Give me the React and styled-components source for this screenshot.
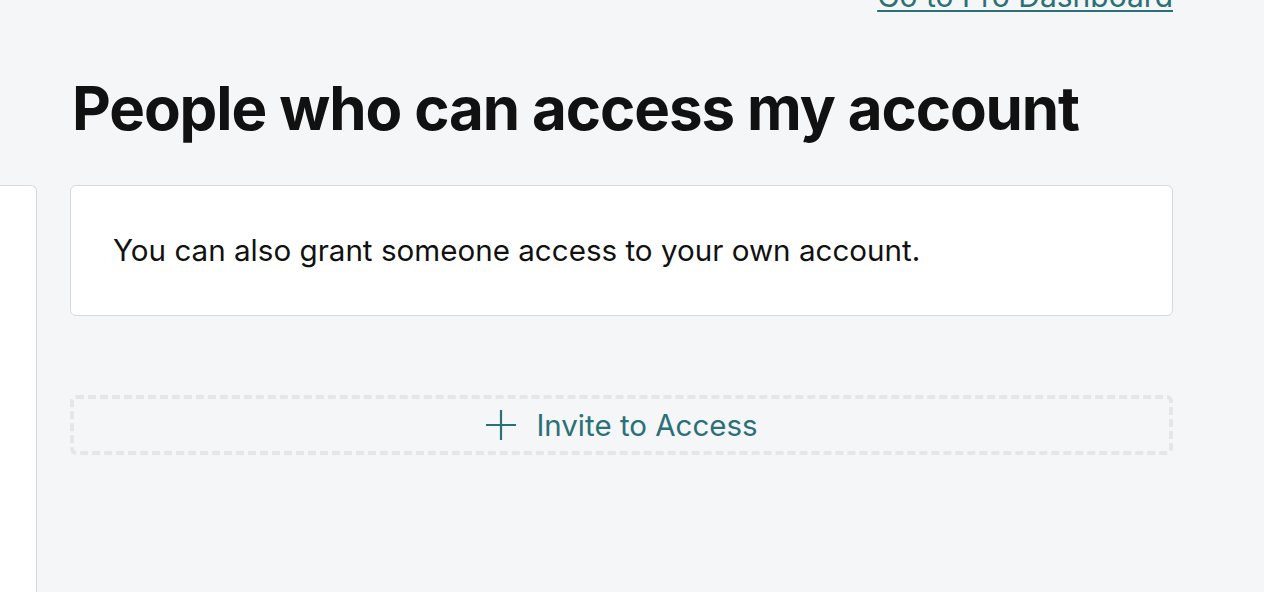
import React from "react";
import styled, { createGlobalStyle } from "styled-components";

const colors = {
  page: "#f5f6f8",
  white: "#ffffff",
  ink: "#111111",
  teal: "#2b7077",
  line: "#d4dbe0",
  dash: "#e5e6e7",
};

const GlobalStyle = createGlobalStyle`
  html, body {
    margin: 0;
    padding: 0;
    background: ${colors.page};
    font-family: Inter, "Noto Sans", sans-serif;
    color: ${colors.ink};
    overflow: hidden;
  }
`;

const Layout = styled.div`
  display: grid;
  grid-template-columns: 37px 1103px;
  grid-template-rows: auto 1fr;
  column-gap: 33px;
  min-height: 100vh;
`;

const Header = styled.header`
  grid-column: 2;
  grid-row: 1;
  display: flex;
  flex-direction: column;
`;

const ProLink = styled.a`
  align-self: flex-end;
  margin-top: -18px;
  font-size: 30px;
  line-height: 28px;
  color: ${colors.teal};
  text-decoration: underline;
  text-decoration-thickness: 2px;
  text-underline-offset: 3px;
`;

const Title = styled.h1`
  margin: 60px 0 0 2px;
  font-size: 60px;
  line-height: 76px;
  font-weight: 700;
  letter-spacing: -1.1px;
`;

const Sidebar = styled.aside`
  grid-column: 1;
  grid-row: 2;
  margin-top: 39px;
  background: ${colors.white};
  border: 1.5px solid ${colors.line};
  border-left: none;
  border-bottom: none;
  border-radius: 0 6px 0 0;
`;

const Main = styled.main`
  grid-column: 2;
  grid-row: 2;
  padding-top: 39px;
  display: flex;
  flex-direction: column;
  gap: 79px;
`;

const InfoCard = styled.section`
  box-sizing: border-box;
  height: 131px;
  display: flex;
  align-items: center;
  padding: 0 42px 2px;
  background: ${colors.white};
  border: 1.5px solid ${colors.line};
  border-radius: 6px;
  font-size: 29.6px;
`;

const InviteButton = styled.button`
  box-sizing: border-box;
  height: 60px;
  display: flex;
  align-items: center;
  justify-content: center;
  gap: 19px;
  background: transparent;
  border: 4px dashed ${colors.dash};
  border-radius: 6px;
  color: ${colors.teal};
  font-family: inherit;
  font-size: 29.5px;
  cursor: pointer;
`;

const PlusIcon = () => (
  <svg width="32" height="32" viewBox="0 0 32 32" fill="none">
    <path d="M16 1v30M1 16h30" stroke={colors.teal} strokeWidth="2.2" />
  </svg>
);

export default function App() {
  return (
    <>
      <GlobalStyle />
      <Layout>
        <Header>
          <ProLink href="#">Go to Pro Dashboard</ProLink>
          <Title>People who can access my account</Title>
        </Header>
        <Sidebar />
        <Main>
          <InfoCard>You can also grant someone access to your own account.</InfoCard>
          <InviteButton>
            <PlusIcon />
            Invite to Access
          </InviteButton>
        </Main>
      </Layout>
    </>
  );
}
